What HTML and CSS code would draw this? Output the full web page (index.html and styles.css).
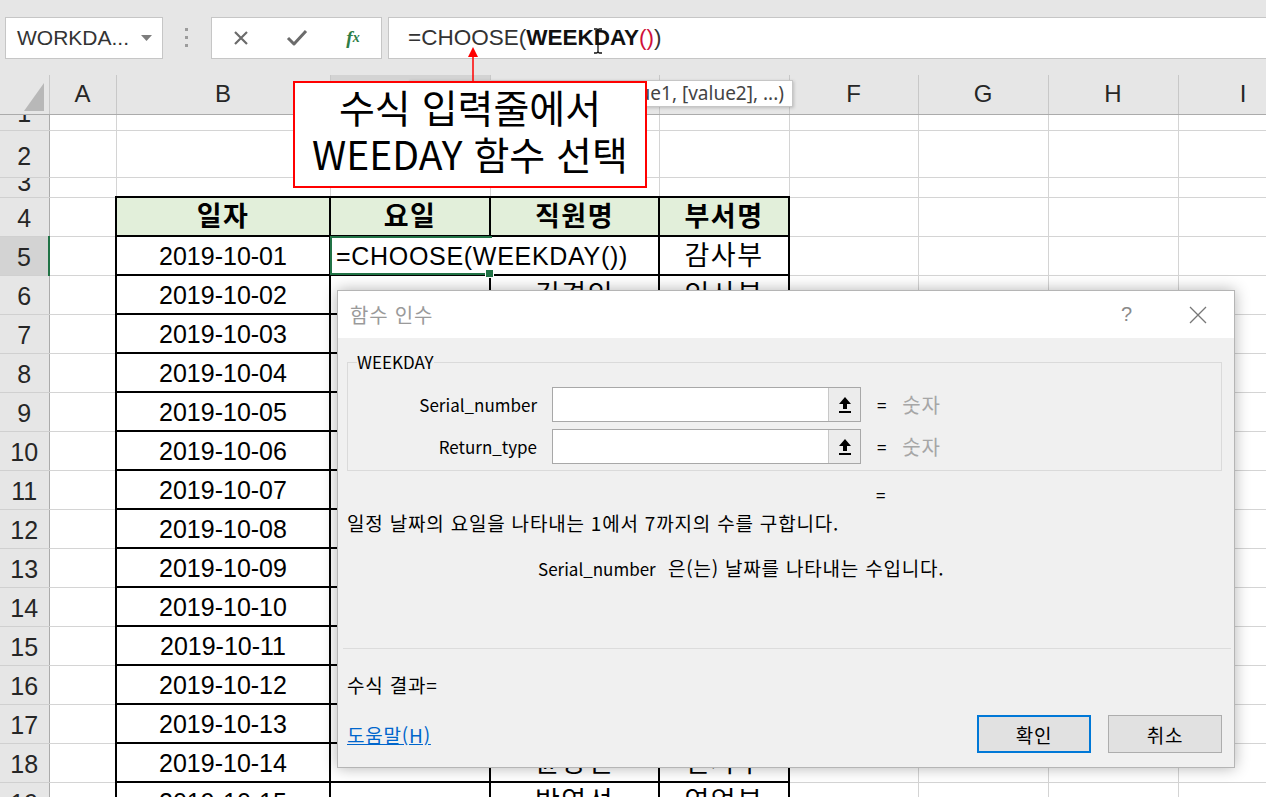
FILE: index.html
```html
<!DOCTYPE html>
<html lang="ko">

<head>
    <meta charset="UTF-8">
    <meta name="viewport" content="width=device-width, initial-scale=1.0">
    <title>WEEKDAY 함수 인수</title>
    <link rel="stylesheet" href="styles.css">
</head>

<body>
    <div class="app">
        <div class="toolbar">
            <div class="name-box">
                <span>WORKDA...</span>
                <svg class="caret" width="11" height="6" viewBox="0 0 11 6"><polygon points="0,0 11,0 5.5,6" fill="#7d7d7d"/></svg>
            </div>
            <div class="grip"><i></i><i></i><i></i></div>
            <div class="fx-buttons">
                <span class="slot"><svg width="16" height="16" viewBox="0 0 16 16"><path d="M2 2 L14 14 M14 2 L2 14" stroke="#6b6b6b" stroke-width="2.2" fill="none"/></svg></span>
                <span class="slot"><svg width="22" height="17" viewBox="0 0 22 17"><path d="M2 9 L8 15 L20 2" stroke="#6b6b6b" stroke-width="3" fill="none" stroke-linejoin="round"/></svg></span>
                <span class="slot fx">f<sub>x</sub></span>
            </div>
            <div class="formula-input">
                <span>=CHOOSE(<b>WEEKDAY</b><span class="paren">()</span>)</span>
                <svg class="ibeam" width="12" height="26" viewBox="0 0 12 26"><path d="M2 1 H4.5 Q6 1 6 3 V23 Q6 25 4.5 25 H2 M10 1 H7.5 Q6 1 6 3 M6 23 Q6 25 7.5 25 H10" stroke="#111" stroke-width="1.3" fill="none"/></svg>
            </div>
        </div>

        <div class="sheet-wrap">
            <table class="sheet">
                <colgroup>
                    <col style="width:49px">
                    <col style="width:67px">
                    <col style="width:214px">
                    <col style="width:160px">
                    <col style="width:169px">
                    <col style="width:130px">
                    <col style="width:129px">
                    <col style="width:130px">
                    <col style="width:130px">
                    <col style="width:130px">
                </colgroup>
                <thead>
                    <tr class="col-hdr">
                        <th class="corner"><svg width="20" height="28" viewBox="0 0 20 28"><polygon points="20,0 20,28 0,28" fill="#b8b8b8"/></svg></th>
                        <th>A</th><th>B</th><th class="sel">C</th><th>D</th><th>E</th><th>F</th><th>G</th><th>H</th><th>I</th>
                    </tr>
                </thead>
                <tbody>
                    <tr class="r-thin"><th class="rh"><span class="clip1">1</span></th><td></td><td></td><td></td><td></td><td></td><td></td><td></td><td></td><td></td></tr>
                    <tr class="r-tall"><th class="rh">2</th><td></td><td></td><td></td><td></td><td></td><td></td><td></td><td></td><td></td></tr>
                    <tr class="r-short"><th class="rh"><span class="clip3">3</span></th><td></td><td></td><td></td><td></td><td></td><td></td><td></td><td></td><td></td></tr>
                    <tr class="head"><th class="rh">4</th><td></td><td class="d h ko">일자</td><td class="d h ko">요일</td><td class="d h ko">직원명</td><td class="d h ko">부서명</td><td></td><td></td><td></td><td></td></tr>
                    <tr><th class="rh sel">5</th><td></td><td class="d">2019-10-01</td><td class="d active"><span class="formula">=CHOOSE(WEEKDAY())</span></td><td class="d spill"></td><td class="d ko">감사부</td><td></td><td></td><td></td><td></td></tr>
                    <tr><th class="rh">6</th><td></td><td class="d">2019-10-02</td><td class="d"></td><td class="d ko">김경인</td><td class="d ko">인사부</td><td></td><td></td><td></td><td></td></tr>
                    <tr><th class="rh">7</th><td></td><td class="d">2019-10-03</td><td class="d"></td><td class="d ko">이민수</td><td class="d ko">영업부</td><td></td><td></td><td></td><td></td></tr>
                    <tr><th class="rh">8</th><td></td><td class="d">2019-10-04</td><td class="d"></td><td class="d ko">박지현</td><td class="d ko">총무부</td><td></td><td></td><td></td><td></td></tr>
                    <tr><th class="rh">9</th><td></td><td class="d">2019-10-05</td><td class="d"></td><td class="d ko">최영호</td><td class="d ko">감사부</td><td></td><td></td><td></td><td></td></tr>
                    <tr><th class="rh">10</th><td></td><td class="d">2019-10-06</td><td class="d"></td><td class="d ko">정수진</td><td class="d ko">인사부</td><td></td><td></td><td></td><td></td></tr>
                    <tr><th class="rh">11</th><td></td><td class="d">2019-10-07</td><td class="d"></td><td class="d ko">강동원</td><td class="d ko">영업부</td><td></td><td></td><td></td><td></td></tr>
                    <tr><th class="rh">12</th><td></td><td class="d">2019-10-08</td><td class="d"></td><td class="d ko">조현우</td><td class="d ko">총무부</td><td></td><td></td><td></td><td></td></tr>
                    <tr><th class="rh">13</th><td></td><td class="d">2019-10-09</td><td class="d"></td><td class="d ko">윤서연</td><td class="d ko">감사부</td><td></td><td></td><td></td><td></td></tr>
                    <tr><th class="rh">14</th><td></td><td class="d">2019-10-10</td><td class="d"></td><td class="d ko">장민호</td><td class="d ko">영업부</td><td></td><td></td><td></td><td></td></tr>
                    <tr><th class="rh">15</th><td></td><td class="d">2019-10-11</td><td class="d"></td><td class="d ko">임하늘</td><td class="d ko">인사부</td><td></td><td></td><td></td><td></td></tr>
                    <tr><th class="rh">16</th><td></td><td class="d">2019-10-12</td><td class="d"></td><td class="d ko">한지수</td><td class="d ko">총무부</td><td></td><td></td><td></td><td></td></tr>
                    <tr><th class="rh">17</th><td></td><td class="d">2019-10-13</td><td class="d"></td><td class="d ko">오세훈</td><td class="d ko">감사부</td><td></td><td></td><td></td><td></td></tr>
                    <tr><th class="rh">18</th><td></td><td class="d">2019-10-14</td><td class="d"></td><td class="d ko">윤상민</td><td class="d ko">인사부</td><td></td><td></td><td></td><td></td></tr>
                    <tr><th class="rh">19</th><td></td><td class="d">2019-10-15</td><td class="d"></td><td class="d ko">박영선</td><td class="d ko">영업부</td><td></td><td></td><td></td><td></td></tr>
                </tbody>
            </table>
        </div>

        <div class="tooltip">CHOOSE(<b>index_num</b>, value1, [value2], ...)</div>

        <div class="callout">수식 입력줄에서<br>WEEDAY 함수 선택</div>
        <svg class="arrow" width="14" height="38" viewBox="0 0 14 38"><path d="M7 38 V11" stroke="#ff0000" stroke-width="1.5"/><polygon points="7,3 2,13 12,13" fill="#ff0000"/></svg>

        <div class="dialog">
            <div class="dialog-title">
                <span class="caption">함수 인수</span>
                <span class="help">?</span>
                <svg class="close" width="18" height="18" viewBox="0 0 18 18"><path d="M1 1 L17 17 M17 1 L1 17" stroke="#777" stroke-width="1.3" fill="none"/></svg>
            </div>
            <div class="dialog-body">
                <fieldset class="group">
                    <legend>WEEKDAY</legend>
                    <div class="arg">
                        <label>Serial_number</label>
                        <div class="arg-input"><span class="field"></span><span class="pick"><svg width="14" height="18" viewBox="0 0 14 18"><polygon points="7,1 13,8 9,8 9,13 5,13 5,8 1,8" fill="#000"/><rect x="1" y="15" width="12" height="2" fill="#000"/></svg></span></div>
                        <span class="eq">=</span>
                        <span class="type">숫자</span>
                    </div>
                    <div class="arg">
                        <label>Return_type</label>
                        <div class="arg-input"><span class="field"></span><span class="pick"><svg width="14" height="18" viewBox="0 0 14 18"><polygon points="7,1 13,8 9,8 9,13 5,13 5,8 1,8" fill="#000"/><rect x="1" y="15" width="12" height="2" fill="#000"/></svg></span></div>
                        <span class="eq">=</span>
                        <span class="type">숫자</span>
                    </div>
                </fieldset>
                <p class="result-eq">=</p>
                <p class="desc">일정 날짜의 요일을 나타내는 1에서 7까지의 수를 구합니다.</p>
                <p class="arg-desc"><span class="latin">Serial_number</span>&nbsp;&nbsp;은(는) 날짜를 나타내는 수입니다.</p>
                <hr>
                <p class="formula-result">수식 결과=</p>
                <div class="dialog-footer">
                    <a class="help-link" href="#">도움말(H)</a>
                    <div class="buttons">
                        <button class="ok">확인</button>
                        <button class="cancel">취소</button>
                    </div>
                </div>
            </div>
        </div>
    </div>
</body>

</html>
```

FILE: styles.css
```css
* {
    margin: 0;
    padding: 0;
    box-sizing: border-box;
}

body {
    width: 1266px;
    height: 797px;
    overflow: hidden;
    background: #fff;
    color: #000;
    font-family: "Liberation Sans", "Noto Sans CJK KR", sans-serif;
}

.app {
    position: relative;
    width: 1266px;
    height: 797px;
    overflow: hidden;
}

/* formula bar */
.toolbar {
    display: flex;
    align-items: center;
    height: 75px;
    padding-left: 5px;
    background: #e6e6e6;
}

.name-box {
    display: flex;
    align-items: center;
    justify-content: space-between;
    width: 158px;
    height: 42px;
    padding: 0 10px 0 11px;
    background: #fff;
    border: 1px solid #c6c6c6;
    font-size: 21px;
    color: #333;
}

.grip {
    display: flex;
    flex-direction: column;
    gap: 5px;
    margin: 0 23px 0 22px;
}

.grip i {
    width: 3px;
    height: 3px;
    background: #9c9c9c;
}

.fx-buttons {
    display: flex;
    align-items: center;
    width: 171px;
    height: 42px;
    padding-left: 1px;
    background: #fff;
    border: 1px solid #c6c6c6;
}

.fx-buttons .slot {
    display: flex;
    align-items: center;
    justify-content: center;
    width: 56px;
}

.fx-buttons .fx {
    font-family: "Liberation Serif", serif;
    font-style: italic;
    font-weight: bold;
    font-size: 19px;
    color: #2e7d46;
}

.fx sub {
    font-size: 14px;
    vertical-align: -2px;
}

.formula-input {
    position: relative;
    flex: 1;
    display: flex;
    align-items: center;
    height: 42px;
    margin-left: 6px;
    padding-left: 19px;
    background: #fff;
    border: 1px solid #c6c6c6;
    border-right: none;
    font-size: 22.5px;
    color: #333;
}

.formula-input b {
    color: #111;
}

.formula-input .paren {
    color: #d0103a;
}

.ibeam {
    position: absolute;
    left: 203px;
    top: 10px;
}

/* worksheet */
.sheet-wrap {
    width: 1266px;
    overflow: hidden;
}

.sheet {
    width: 1308px;
    table-layout: fixed;
    border-collapse: collapse;
    font-size: 25px;
    line-height: 28px;
}

.sheet td {
    border: 1px solid #d4d4d4;
    padding-bottom: 4px;
    text-align: center;
    vertical-align: bottom;
    white-space: nowrap;
}

.sheet td.ko {
    font-size: 27px;
    letter-spacing: 1.5px;
}

.col-hdr {
    height: 39px;
}

.col-hdr th {
    background: #e6e6e6;
    border-right: 1px solid #c8c8c8;
    border-bottom: 1px solid #ababab;
    font-weight: normal;
    font-size: 24px;
    color: #262626;
}

.col-hdr th.sel {
    background: #d3d3d3;
}

.col-hdr .corner {
    text-align: right;
    vertical-align: bottom;
    padding: 0 5px 3px 0;
}

.corner svg {
    display: block;
    margin-left: auto;
}

.sheet tbody tr {
    height: 39px;
}

.sheet tbody tr.r-thin {
    height: 16px;
}

.sheet tbody tr.r-tall {
    height: 47px;
}

.sheet tbody tr.r-short {
    height: 20px;
}

.rh {
    overflow: hidden;
    padding-bottom: 4px;
    vertical-align: bottom;
    background: #e6e6e6;
    border-right: 1px solid #ababab;
    border-bottom: 1px solid #d0d0d0;
    font-weight: normal;
    font-size: 25px;
    color: #262626;
}

.r-tall .rh {
    padding-bottom: 7px;
}

.r-thin .rh,
.r-short .rh {
    padding-bottom: 0;
    vertical-align: middle;
}

.rh.sel {
    background: #d3d3d3;
    border-right: 2px solid #217346;
}

.clip1,
.clip3 {
    display: block;
    line-height: 28px;
}

.clip1 {
    margin: -18px 0 0;
}

.clip3 {
    margin: -11px 0 0;
}

.sheet td.d {
    border: 2px solid #000;
}

.sheet td.h {
    background: #e2efda;
    font-weight: bold;
}

.sheet td.active {
    position: relative;
    text-align: left;
    padding-left: 5px;
    border-right: hidden;
}

.formula {
    letter-spacing: 0.7px;
}

.sheet td.spill {
    border-left: hidden;
}

.active::before {
    content: "";
    position: absolute;
    left: -1px;
    top: -1px;
    right: -2px;
    bottom: -1px;
    border: 2px solid #217346;
    border-right: none;
}

.active::after {
    content: "";
    position: absolute;
    right: -4px;
    bottom: -4px;
    width: 7px;
    height: 7px;
    background: #217346;
    border: 1px solid #fff;
}

/* overlays */
.tooltip {
    position: absolute;
    top: 80px;
    right: 473px;
    height: 27px;
    padding: 0 8px;
    background: #fff;
    border: 1px solid #c6c6c6;
    box-shadow: 1px 1px 3px rgba(0, 0, 0, 0.18);
    font-family: "Noto Sans", sans-serif;
    font-size: 19px;
    line-height: 25px;
    color: #444;
    white-space: nowrap;
}

.tooltip b {
    font-weight: bold;
}

.callout {
    position: absolute;
    left: 293px;
    top: 81px;
    width: 354px;
    height: 107px;
    padding-top: 0;
    background: #fff;
    border: 2px solid #ff0000;
    font-family: "Noto Sans CJK KR", sans-serif;
    font-size: 39px;
    line-height: 47px;
    text-align: center;
    white-space: nowrap;
}

.arrow {
    position: absolute;
    left: 466px;
    top: 44px;
}

/* function arguments dialog */
.dialog {
    position: absolute;
    left: 337px;
    top: 290px;
    width: 898px;
    height: 478px;
    background: #f0f0f0;
    border: 1px solid #b5b5b5;
    box-shadow: 0 0 14px rgba(0, 0, 0, 0.3);
    font-family: "Noto Sans CJK KR", "Liberation Sans", sans-serif;
    font-size: 19px;
    letter-spacing: 0.8px;
    color: #000;
}

.dialog-title {
    display: flex;
    align-items: center;
    height: 47px;
    padding: 0 27px 0 12px;
    background: #fff;
    color: #9a9a9a;
}

.dialog-title .caption {
    flex: 1;
    font-size: 20px;
}

.dialog-title .help {
    margin-right: 56px;
    font-family: "Liberation Sans", sans-serif;
    font-size: 20px;
    color: #8a8a8a;
}

.dialog-body {
    padding: 12px 12px 0 9px;
}

.group {
    border: 1px solid #dadada;
    padding: 13px 0 6px;
}

.group legend {
    margin-left: 9px;
    font-size: 17px;
    letter-spacing: 0;
    line-height: 24px;
}

.arg {
    display: flex;
    align-items: center;
    height: 35px;
}

.arg + .arg {
    margin-top: 7px;
}

.arg label {
    width: 189px;
    margin-right: 15px;
    font-size: 17px;
    letter-spacing: 0;
    text-align: right;
}

.arg-input {
    display: flex;
    width: 309px;
    height: 35px;
    background: #fff;
    border: 1px solid #a8a8a8;
}

.arg-input .field {
    flex: 1;
}

.arg-input .pick {
    display: flex;
    align-items: center;
    justify-content: center;
    width: 32px;
    background: #ececec;
    border-left: 1px solid #c8c8c8;
}

.arg .eq {
    margin-left: 16px;
    font-size: 17px;
}

.arg .type {
    margin-left: 15px;
    font-size: 20px;
    color: #a6a6a6;
}

.result-eq {
    margin-top: 12px;
    padding-left: 529px;
    font-size: 17px;
    line-height: 24px;
}

.desc {
    margin-top: 4px;
    line-height: 24px;
}

.arg-desc {
    margin-top: 21px;
    padding-left: 191px;
    line-height: 24px;
}

.arg-desc .latin {
    font-size: 17px;
    letter-spacing: 0;
}

.dialog-body hr {
    margin: 67px -9px 0 -4px;
    border: none;
    border-top: 1px solid #dcdcdc;
}

.formula-result {
    margin-top: 24px;
    line-height: 24px;
}

.dialog-footer {
    display: flex;
    align-items: center;
    justify-content: space-between;
    margin-top: 18px;
}

.help-link {
    color: #0066cc;
    text-decoration: underline;
}

.buttons {
    display: flex;
    gap: 17px;
}

.buttons button {
    width: 114px;
    height: 38px;
    background: #e1e1e1;
    border: 1px solid #adadad;
    font-family: "Noto Sans CJK KR", sans-serif;
    font-size: 19px;
    letter-spacing: 0.8px;
    color: #000;
}

.buttons .ok {
    border: 2px solid #0078d7;
}
```
